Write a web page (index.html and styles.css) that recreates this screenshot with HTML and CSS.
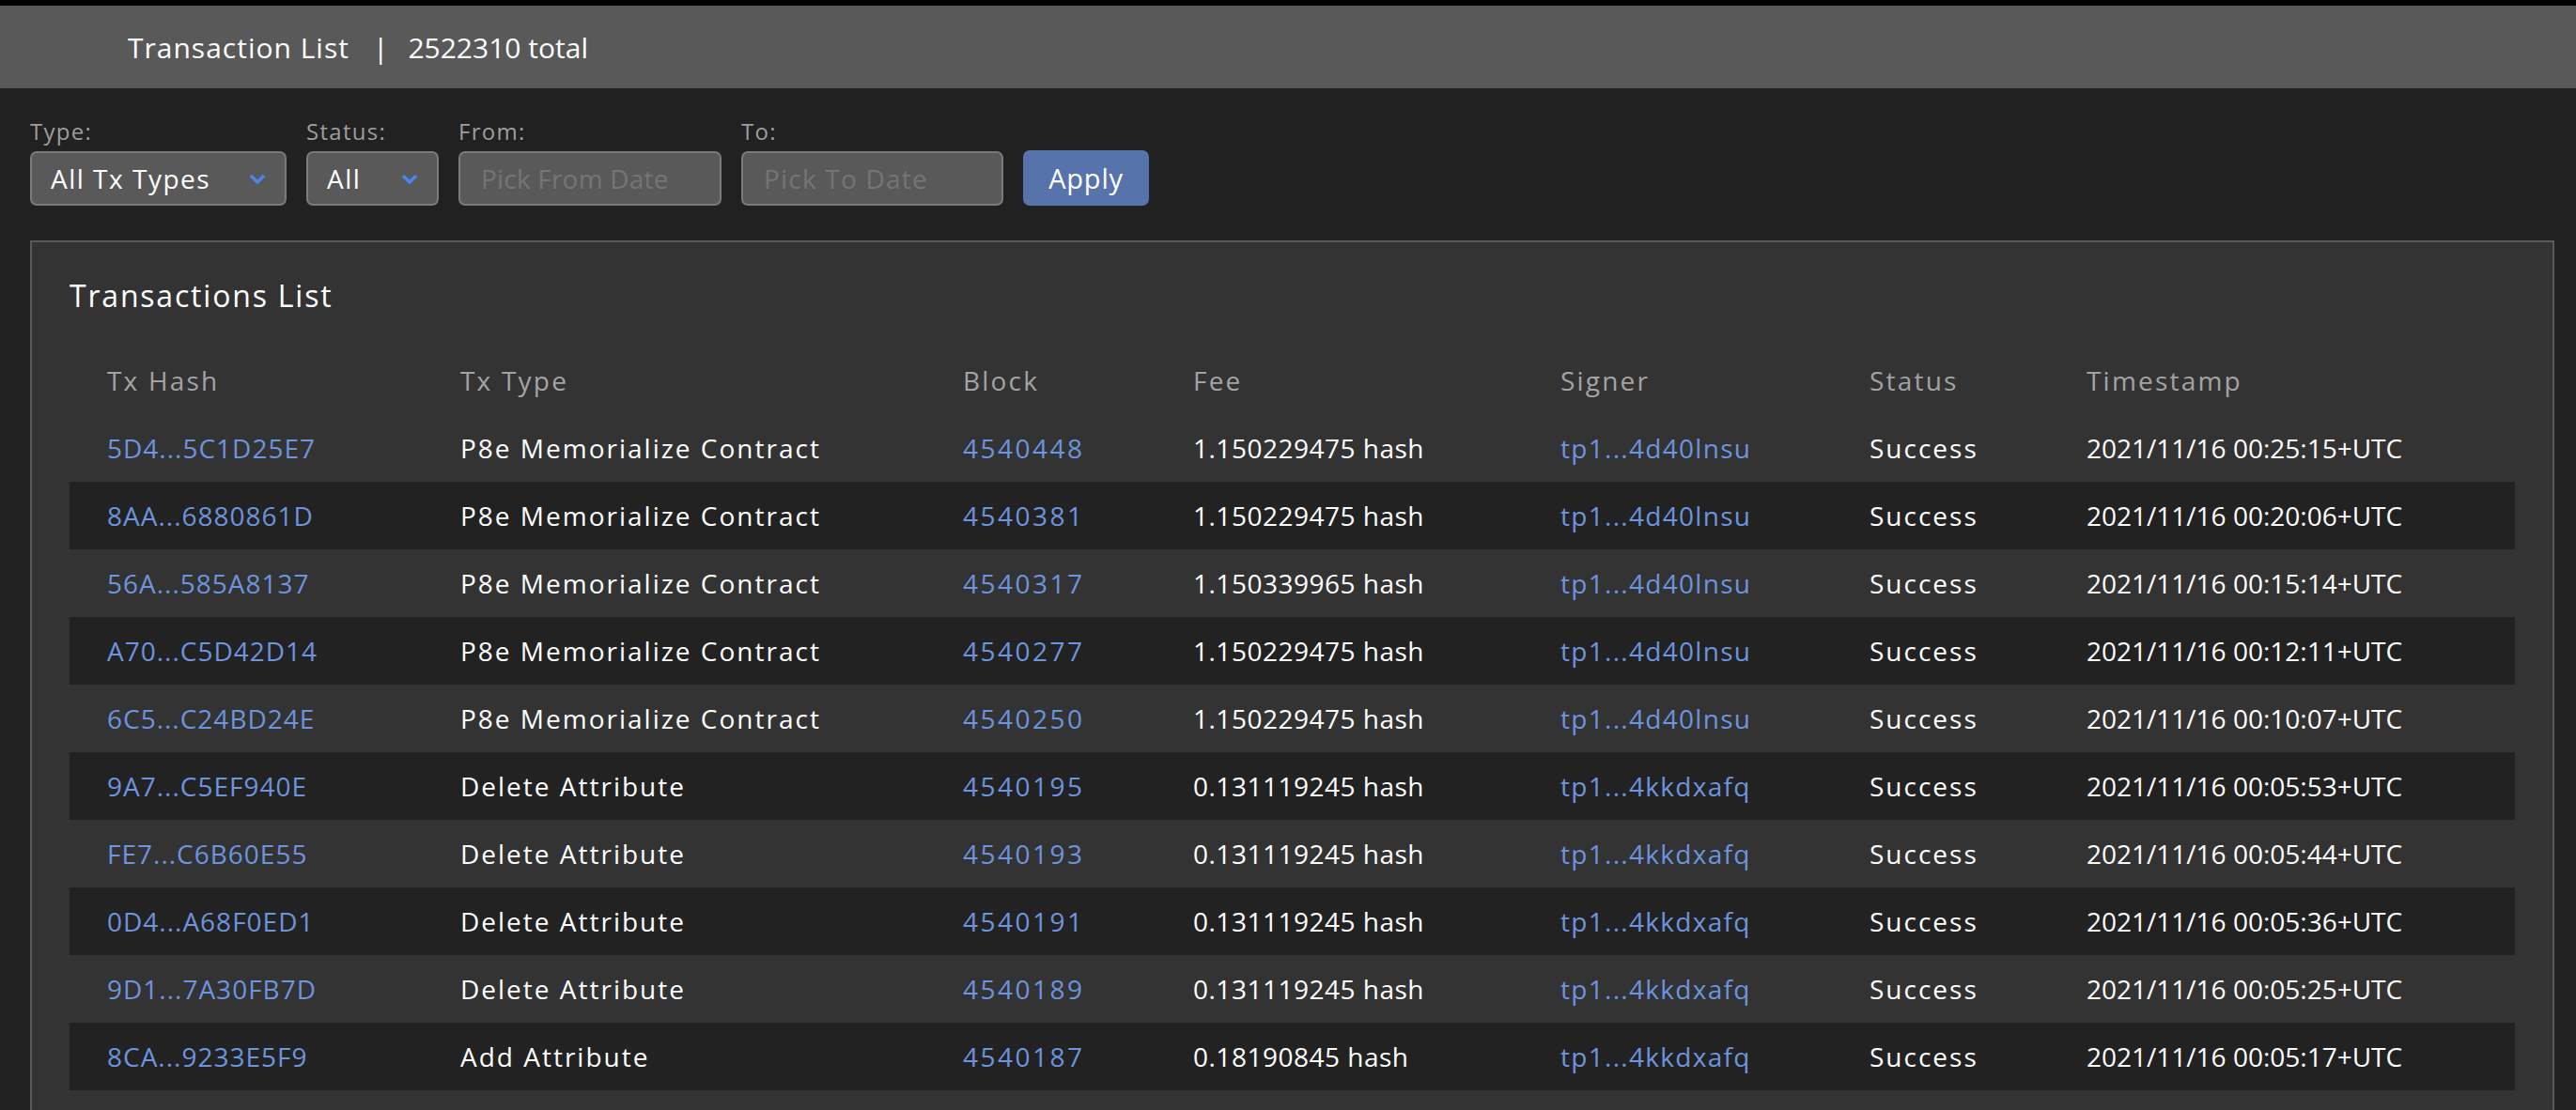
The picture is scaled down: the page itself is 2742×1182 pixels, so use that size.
FILE: index.html
```html
<!DOCTYPE html>
<html>
<head>
<meta charset="utf-8">
<link rel="stylesheet" href="styles.css">
</head>
<body>
<div class="topline"></div>
<header class="header">
  <span class="header-title">Transaction List</span>
  <span class="header-sep">|</span>
  <span class="header-total">2522310 total</span>
</header>
<main class="page">
  <div class="filters">
    <div class="field">
      <label class="field-label">Type:</label>
      <div class="select select-type">
        <span class="select-value">All Tx Types</span>
        <svg class="chev" width="18" height="12" viewBox="0 0 18 12"><path d="M2 2 L9 9 L16 2" fill="none" stroke="#4a86e8" stroke-width="3.6"/></svg>
      </div>
    </div>
    <div class="field">
      <label class="field-label">Status:</label>
      <div class="select select-status">
        <span class="select-value">All</span>
        <svg class="chev" width="18" height="12" viewBox="0 0 18 12"><path d="M2 2 L9 9 L16 2" fill="none" stroke="#4a86e8" stroke-width="3.6"/></svg>
      </div>
    </div>
    <div class="field">
      <label class="field-label">From:</label>
      <div class="date-input"><span class="placeholder">Pick From Date</span></div>
    </div>
    <div class="field">
      <label class="field-label">To:</label>
      <div class="date-input"><span class="placeholder">Pick To Date</span></div>
    </div>
    <button class="apply">Apply</button>
  </div>

  <section class="card">
    <h2 class="card-title">Transactions List</h2>
    <div class="table">
      <div class="row head">
        <div>Tx Hash</div><div>Tx Type</div><div>Block</div><div>Fee</div><div>Signer</div><div>Status</div><div>Timestamp</div>
      </div>
      <div class="row">
        <div class="link">5D4...5C1D25E7</div><div>P8e Memorialize Contract</div><div class="link">4540448</div><div>1.150229475 hash</div><div class="link">tp1...4d40lnsu</div><div>Success</div><div>2021/11/16 00:25:15+UTC</div>
      </div>
      <div class="row">
        <div class="link">8AA...6880861D</div><div>P8e Memorialize Contract</div><div class="link">4540381</div><div>1.150229475 hash</div><div class="link">tp1...4d40lnsu</div><div>Success</div><div>2021/11/16 00:20:06+UTC</div>
      </div>
      <div class="row">
        <div class="link">56A...585A8137</div><div>P8e Memorialize Contract</div><div class="link">4540317</div><div>1.150339965 hash</div><div class="link">tp1...4d40lnsu</div><div>Success</div><div>2021/11/16 00:15:14+UTC</div>
      </div>
      <div class="row">
        <div class="link">A70...C5D42D14</div><div>P8e Memorialize Contract</div><div class="link">4540277</div><div>1.150229475 hash</div><div class="link">tp1...4d40lnsu</div><div>Success</div><div>2021/11/16 00:12:11+UTC</div>
      </div>
      <div class="row">
        <div class="link">6C5...C24BD24E</div><div>P8e Memorialize Contract</div><div class="link">4540250</div><div>1.150229475 hash</div><div class="link">tp1...4d40lnsu</div><div>Success</div><div>2021/11/16 00:10:07+UTC</div>
      </div>
      <div class="row">
        <div class="link">9A7...C5EF940E</div><div>Delete Attribute</div><div class="link">4540195</div><div>0.131119245 hash</div><div class="link">tp1...4kkdxafq</div><div>Success</div><div>2021/11/16 00:05:53+UTC</div>
      </div>
      <div class="row">
        <div class="link">FE7...C6B60E55</div><div>Delete Attribute</div><div class="link">4540193</div><div>0.131119245 hash</div><div class="link">tp1...4kkdxafq</div><div>Success</div><div>2021/11/16 00:05:44+UTC</div>
      </div>
      <div class="row">
        <div class="link">0D4...A68F0ED1</div><div>Delete Attribute</div><div class="link">4540191</div><div>0.131119245 hash</div><div class="link">tp1...4kkdxafq</div><div>Success</div><div>2021/11/16 00:05:36+UTC</div>
      </div>
      <div class="row">
        <div class="link">9D1...7A30FB7D</div><div>Delete Attribute</div><div class="link">4540189</div><div>0.131119245 hash</div><div class="link">tp1...4kkdxafq</div><div>Success</div><div>2021/11/16 00:05:25+UTC</div>
      </div>
      <div class="row">
        <div class="link">8CA...9233E5F9</div><div>Add Attribute</div><div class="link">4540187</div><div>0.18190845 hash</div><div class="link">tp1...4kkdxafq</div><div>Success</div><div>2021/11/16 00:05:17+UTC</div>
      </div>
    </div>
  </section>
</main>
</body>
</html>
```

FILE: styles.css
```css
* { box-sizing: border-box; }
html, body {
  margin: 0;
  padding: 0;
  background: #212121;
  font-family: "Open Sans", "Noto Sans", sans-serif;
  color: #ffffff;
  overflow: hidden;
  height: 1182px;
}
.topline {
  height: 6px;
  background: #000000;
}
.header {
  height: 88px;
  background: #595959;
  display: flex;
  align-items: center;
  padding-left: 136px;
  font-size: 30px;
  font-weight: 500;
  color: #ffffff;
}
.header-title {
  letter-spacing: 1px;
}
.header-sep {
  margin: 0 21px 0 25px;
}
.page {
  padding: 0 23px 0 32px;
}
.filters {
  display: flex;
  align-items: flex-end;
  gap: 21px;
  padding-top: 32px;
}
.field {
  display: flex;
  flex-direction: column;
}
.field-label {
  font-size: 24px;
  color: #9e9e9e;
  height: 35px;
  line-height: 28px;
  letter-spacing: 1.3px;
}
.select, .date-input {
  height: 58px;
  background: #595959;
  border: 2px solid #7a7a7a;
  border-radius: 7px;
  display: flex;
  align-items: center;
  font-size: 28px;
}
.select {
  justify-content: space-between;
  padding: 0 20px 0 20px;
  color: #ffffff;
}
.select-value {
  letter-spacing: 1.5px;
}
.select-type { width: 273px; }
.select-status { width: 141px; }
.date-input {
  width: 280px;
  padding-left: 22px;
}
.field:nth-child(4) .date-input { width: 279px; }
.placeholder {
  color: #757575;
  letter-spacing: 0.2px;
}
.field:nth-child(4) .placeholder { letter-spacing: 1.2px; }
.chev { display: block; margin-top: 2px; }
.apply {
  height: 59px;
  width: 134px;
  background: #5773ac;
  border: none;
  border-radius: 7px;
  color: #ffffff;
  font-family: inherit;
  font-size: 29px;
  letter-spacing: 0.8px;
  padding: 0;
}
.card {
  margin-top: 37px;
  width: 2687px;
  background: #333333;
  border: 2px solid #5a5a5a;
  border-bottom: none;
  padding: 0 40px 0 40px;
  height: 1000px;
}
.card-title {
  margin: 0;
  padding-top: 37px;
  font-size: 32px;
  font-weight: 400;
  line-height: 40px;
  letter-spacing: 1.8px;
  color: #ffffff;
}
.table {
  margin-top: 34px;
  width: 2603px;
}
.row {
  display: grid;
  grid-template-columns: 376px 535px 245px 391px 329px 231px 1fr;
  height: 72px;
  align-items: center;
  font-size: 28px;
  color: #ffffff;
}
.row > div {
  padding-left: 40px;
  white-space: nowrap;
}
.row > div:nth-child(1) { letter-spacing: 1px; }
.row > div:nth-child(2) { letter-spacing: 2px; }
.row > div:nth-child(3) { letter-spacing: 2.5px; }
.row > div:nth-child(4) { letter-spacing: 0.5px; }
.row > div:nth-child(5) { letter-spacing: 1.3px; }
.row > div:nth-child(6) { letter-spacing: 2px; }
.row > div:nth-child(7) { letter-spacing: 0; }
.row.head {
  color: #a3a3a3;
  font-weight: 500;
}
.row.head > div {
  letter-spacing: 2.2px;
}
.row:nth-child(odd):not(.head) {
  background: #222222;
}
.link {
  color: #6d94de;
}
```
